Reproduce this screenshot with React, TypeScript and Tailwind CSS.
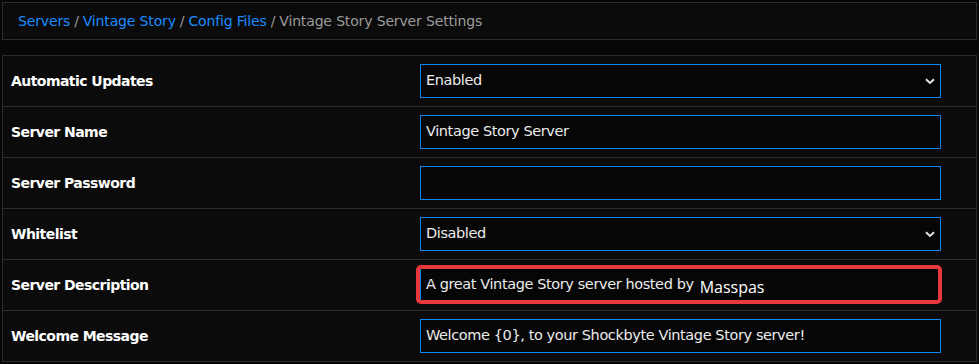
import React from "react";

const rows = [
  { label: "Automatic Updates", kind: "select", value: "Enabled" },
  { label: "Server Name", kind: "text", value: "Vintage Story Server" },
  { label: "Server Password", kind: "text", value: "" },
  { label: "Whitelist", kind: "select", value: "Disabled" },
  { label: "Server Description", kind: "desc", value: "A great Vintage Story server hosted by" },
  { label: "Welcome Message", kind: "text", value: "Welcome {0}, to your Shockbyte Vintage Story server!" },
];

function Chevron() {
  return (
    <svg width="10" height="7" viewBox="0 0 10 7" className="ml-auto">
      <path d="M1 1.2 L5 5 L9 1.2" fill="none" stroke="#e6e6e6" strokeWidth="1.9" />
    </svg>
  );
}

function Field({ kind, value }: { kind: string; value: string }) {
  if (kind === "desc") {
    return (
      <div className="relative">
        <div className="flex h-[34px] w-[521px] items-center border border-[#0d86f2] bg-[#060606] px-[5px] text-[14.5px] text-[#ececec] tracking-[-0.4px]">
          {value}
          <span className="ml-[6px] mt-[3px] text-[16px] text-white tracking-normal [font-family:'Open_Sans',sans-serif]">Masspas</span>
        </div>
        <div className="absolute left-[-4px] top-[-3px] h-[39px] w-[526px] rounded-[5px] border-[4px] border-[#e8383f]" />
      </div>
    );
  }
  return (
    <div className="flex h-[34px] w-[521px] items-center border border-[#0d86f2] bg-[#060606] pl-[5px] pr-[5px] text-[14.5px] text-[#ececec] tracking-[-0.4px]">
      {value}
      {kind === "select" && <Chevron />}
    </div>
  );
}

export default function App() {
  return (
    <div className="min-h-screen bg-[#070707] pt-[2px] px-[2px] [font-family:'DejaVu_Sans',sans-serif]">
      <div className="flex h-[38px] w-[975px] items-center border border-[#2b2b2b] bg-[#0b0b0b] pl-[15px] text-[14px] tracking-[-0.15px]">
        <span className="text-[#1a8cff]">Servers</span>
        <span className="mx-[4px] text-[#9b9b9b]">/</span>
        <span className="text-[#1a8cff]">Vintage Story</span>
        <span className="mx-[4px] text-[#9b9b9b]">/</span>
        <span className="text-[#1a8cff]">Config Files</span>
        <span className="mx-[4px] text-[#9b9b9b]">/</span>
        <span className="text-[#9b9b9b]">Vintage Story Server Settings</span>
      </div>
      <div className="mt-[15px] w-[975px] border-t border-l border-r border-[#2b2b2b] bg-[#0b0b0b]">
        {rows.map((r) => (
          <div key={r.label} className="flex h-[51px] items-center border-b border-[#2b2b2b]">
            <div className="w-[417px] pl-[8px] text-[14px] font-bold text-white tracking-[-0.55px]">{r.label}</div>
            <Field kind={r.kind} value={r.value} />
          </div>
        ))}
      </div>
    </div>
  );
}
